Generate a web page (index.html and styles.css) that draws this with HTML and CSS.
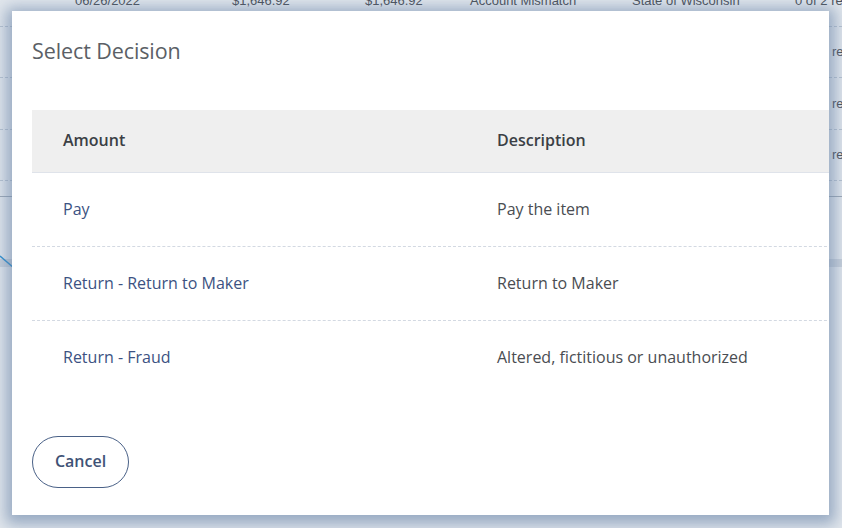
FILE: index.html
```html
<!DOCTYPE html>
<html lang="en">
<head>
<meta charset="utf-8">
<title>Select Decision</title>
<link rel="stylesheet" href="styles.css">
</head>
<body>
<div class="page">
  <div class="bg-table">
    <div class="bg-row">
      <span>06/26/2022</span><span>$1,646.92</span><span>$1,646.92</span><span>Account Mismatch</span><span>State of Wisconsin</span><span>0 of 2 re</span>
    </div>
    <div class="bg-row"><span></span><span></span><span></span><span></span><span></span><span class="tail">re</span></div>
    <div class="bg-row"><span></span><span></span><span></span><span></span><span></span><span class="tail">re</span></div>
    <div class="bg-row"><span></span><span></span><span></span><span></span><span></span><span class="tail">re</span></div>
    <div class="bg-rule"></div>
    <div class="bg-band"></div>
  </div>
  <svg class="bg-line" width="20" height="20" viewBox="0 0 20 20"><path d="M0 2 L14 14" stroke="#2b8fd0" stroke-width="1.5" fill="none"/></svg>

  <div class="modal">
    <h2 class="modal-title">Select Decision</h2>
    <div class="decision-table">
      <div class="thead">
        <div class="cell th">Amount</div>
        <div class="cell th">Description</div>
      </div>
      <div class="trow">
        <div class="cell link">Pay</div>
        <div class="cell desc">Pay the item</div>
      </div>
      <div class="trow">
        <div class="cell link">Return - Return to Maker</div>
        <div class="cell desc">Return to Maker</div>
      </div>
      <div class="trow last">
        <div class="cell link">Return - Fraud</div>
        <div class="cell desc">Altered, fictitious or unauthorized</div>
      </div>
    </div>
    <div class="actions">
      <button class="btn-cancel">Cancel</button>
    </div>
  </div>
</div>
</body>
</html>
```

FILE: styles.css
```css
* { box-sizing: border-box; }
html, body { margin: 0; padding: 0; }
body {
  width: 842px;
  height: 528px;
  overflow: hidden;
  background: #e2e7ed;
  font-family: "Open Sans", "Liberation Sans", sans-serif;
}
.page {
  position: relative;
  width: 842px;
  height: 528px;
  overflow: hidden;
}
.bg-table {
  margin-top: -25px;
  font-family: "Liberation Sans", Arial, sans-serif;
  font-size: 13px;
  color: #4a4f57;
}
.bg-row {
  display: grid;
  grid-template-columns: 157px 133px 105px 162px 163px 1fr;
  padding-left: 75px;
  height: 51.5px;
  align-items: center;
  border-bottom: 1px dashed #b9c4d1;
  white-space: nowrap;
}
.bg-row span { display: block; overflow: visible; }
.bg-row .tail { padding-left: 37px; }
.bg-rule {
  height: 16px;
  border-bottom: 1px solid #9ea9b6;
}
.bg-band {
  margin-top: 62px;
  height: 8px;
  background: #c9d1db;
}
.bg-line {
  position: absolute;
  left: 0;
  top: 254px;
}
.modal {
  position: absolute;
  left: 12px;
  top: 11px;
  width: 817px;
  height: 504px;
  background: #ffffff;
  overflow: hidden;
  box-shadow: 0 3px 14px 6px rgba(100, 128, 165, 0.6);
  padding: 0 0 0 20px;
}
.modal-title {
  margin: 0;
  padding-top: 25px;
  height: 99px;
  font-size: 21.5px;
  font-weight: 400;
  color: #5b5f66;
  letter-spacing: -0.1px;
}
.decision-table {
  width: 820px;
}
.thead, .trow {
  display: grid;
  grid-template-columns: 434px 1fr;
  align-items: center;
}
.thead {
  height: 63px;
  background: #efefef;
  border-bottom: 1px solid #dfe3ea;
}
.trow {
  height: 74px;
  border-bottom: 1px dashed #d3d9e2;
}
.trow.last { border-bottom: none; }
.cell {
  padding-left: 31px;
  font-size: 16px;
  white-space: nowrap;
}
.th {
  font-weight: 600;
  color: #3b3f45;
  padding-bottom: 2px;
}
.link { color: #3c5282; padding-bottom: 2px; }
.desc { color: #4a4d52; padding-bottom: 2px; }
.actions {
  padding-top: 41px;
}
.btn-cancel {
  width: 97px;
  height: 52px;
  border: 1.5px solid #4a6187;
  border-radius: 26px;
  background: #ffffff;
  color: #3f5276;
  font-family: "Open Sans", "Liberation Sans", sans-serif;
  font-size: 16px;
  font-weight: 600;
  padding: 0 0 2px 0;
}
```
